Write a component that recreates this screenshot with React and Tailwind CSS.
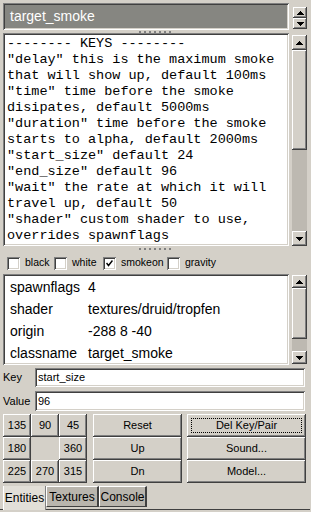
import React from "react";

const sunken =
  "shadow-[inset_1px_1px_0_#808080,inset_-1px_-1px_0_#ffffff,inset_2px_2px_0_#404040,inset_-2px_-2px_0_#d4d0c8]";
const raised =
  "shadow-[inset_-1px_-1px_0_#404040,inset_1px_1px_0_#ffffff,inset_-2px_-2px_0_#808080,inset_2px_2px_0_#d4d0c8]";

const Arrow = ({ down }) => (
  <svg width="7" height="4" viewBox="0 0 7 4" shapeRendering="crispEdges">
    <polygon points={down ? "0,0 7,0 3.5,4" : "0,4 7,4 3.5,0"} fill="#000" />
  </svg>
);

const ArrowBtn = ({ down, className = "" }) => (
  <div className={`flex items-center justify-center bg-[#d4d0c8] ${raised} ${className}`}>
    <Arrow down={down} />
  </div>
);

const Dots = () => (
  <div className="flex justify-center gap-[3px]">
    {[0, 1, 2, 3, 4, 5, 6].map((i) => (
      <div key={i} className="w-[2px] h-[2px] bg-[#808080]" />
    ))}
  </div>
);

const Checkbox = ({ label, checked, width }) => (
  <div className={`flex items-center ${width}`}>
    <div className={`w-[13px] h-[13px] bg-white flex items-center justify-center ${sunken}`}>
      {checked && (
        <svg width="7" height="7" viewBox="0 0 7 7">
          <polyline points="0.5,3 2.5,5.5 6.5,0.5" fill="none" stroke="#000" strokeWidth="1.5" />
        </svg>
      )}
    </div>
    <span className="ml-[5px] text-[10.5px] text-black">{label}</span>
  </div>
);

const Btn = ({ children, className = "", focus }) => (
  <div className={`flex items-center justify-center bg-[#d4d0c8] text-[11px] text-black ${raised} ${className}`}>
    {focus ? (
      <div className="m-[4px] flex-1 self-stretch flex items-center justify-center border border-dotted border-black">
        {children}
      </div>
    ) : (
      children
    )}
  </div>
);

const keysText = [
  "-------- KEYS --------",
  '"delay" this is the maximum smoke',
  "that will show up, default 100ms",
  '"time" time before the smoke',
  "disipates, default 5000ms",
  '"duration" time before the smoke',
  "starts to alpha, default 2000ms",
  '"start_size" default 24',
  '"end_size" default 96',
  '"wait" the rate at which it will',
  "travel up, default 50",
  '"shader" custom shader to use,',
  "overrides spawnflags",
];

const props = [
  ["spawnflags", "4"],
  ["shader", "textures/druid/tropfen"],
  ["origin", "-288 8 -40"],
  ["classname", "target_smoke"],
];

const App = () => {
  return (
    <div className="w-[311px] h-[512px] bg-[#d4d0c8] font-['Liberation_Sans',Arial,sans-serif] flex flex-col pl-[3px] pr-[4px] pt-[3px] overflow-hidden">
      {/* entity class */}
      <div className="flex justify-between">
        <div className={`w-[286px] h-[27px] bg-[#868681] flex items-center pl-[7px] text-white text-[14px] ${sunken}`}>
          target_smoke
        </div>
        <div className="flex flex-col mt-[4px] w-[14px]">
          <ArrowBtn className="h-[11px]" />
          <ArrowBtn down className="h-[11px]" />
        </div>
      </div>

      <div className="h-[3px] flex items-center">
        <div className="w-full"><Dots /></div>
      </div>

      {/* description */}
      <div className="flex justify-between">
        <div className={`w-[286px] h-[213px] bg-white pt-[3px] pl-[4px] overflow-hidden ${sunken}`}>
          {keysText.map((l, i) => (
            <div key={i} className="font-['Liberation_Mono','Courier_New',monospace] text-[13.5px] leading-[16px] text-black whitespace-pre">
              {l}
            </div>
          ))}
        </div>
        <div className="w-[15px] mt-[2px] h-[211px] flex flex-col bg-[#d4d0c8]">
          <ArrowBtn className="h-[15px]" />
          <div className={`h-[100px] ${raised}`} />
          <div className="flex-1 bg-[#bdb9b1]" />
          <ArrowBtn down className="h-[15px]" />
        </div>
      </div>

      <div className="h-[6px] flex items-center">
        <div className="w-full"><Dots /></div>
      </div>

      {/* spawnflags */}
      <div className="h-[22px] flex items-center pl-[4px]">
        <Checkbox label="black" width="w-[47px]" />
        <Checkbox label="white" width="w-[49px]" />
        <Checkbox label="smokeon" checked width="w-[64px]" />
        <Checkbox label="gravity" width="w-[60px]" />
      </div>

      {/* key/value list */}
      <div className="flex justify-between">
        <div className={`w-[286px] h-[91px] bg-white pt-[2px] pl-[7px] overflow-hidden ${sunken}`}>
          {props.map(([k, v]) => (
            <div key={k} className="flex items-center h-[22px] text-[14px] text-black">
              <span className="w-[78px]">{k}</span>
              <span>{v}</span>
            </div>
          ))}
        </div>
        <div className="w-[15px] mt-[1px] h-[89px] flex flex-col">
          <ArrowBtn className="h-[13px]" />
          <div className={`h-[51px] ${raised}`} />
          <div className="flex-1 bg-[#bdb9b1]" />
          <ArrowBtn down className="h-[13px]" />
        </div>
      </div>

      {/* key / value inputs */}
      <div className="flex items-center mt-[3px] h-[19px]">
        <span className="w-[32px] text-[11px] text-black">Key</span>
        <div className={`w-[270px] h-[19px] bg-white flex items-center pl-[3px] text-[11px] text-black ${sunken}`}>
          start_size
        </div>
      </div>
      <div className="flex items-center mt-[4px] h-[20px]">
        <span className="w-[32px] text-[11px] text-black">Value</span>
        <div className={`w-[270px] h-[20px] bg-white flex items-center pl-[3px] text-[11px] text-black ${sunken}`}>
          96
        </div>
      </div>

      {/* buttons */}
      <div className="flex mt-[3px]">
        <div className="grid grid-cols-[28px_28px_28px] grid-rows-[23px_23px_23px] w-[84px]">
          <Btn>135</Btn>
          <Btn>90</Btn>
          <Btn>45</Btn>
          <Btn>180</Btn>
          <div />
          <Btn>360</Btn>
          <Btn>225</Btn>
          <Btn>270</Btn>
          <Btn>315</Btn>
        </div>
        <div className="grid grid-rows-[23px_23px_23px] w-[89px] ml-[6px]">
          <Btn>Reset</Btn>
          <Btn>Up</Btn>
          <Btn>Dn</Btn>
        </div>
        <div className="grid grid-rows-[23px_23px_23px] w-[119px] ml-[5px]">
          <Btn focus>Del Key/Pair</Btn>
          <Btn>Sound...</Btn>
          <Btn>Model...</Btn>
        </div>
      </div>

      {/* tabs */}
      <div className="flex items-start mt-[3px] h-[24px] border-b border-[#404040] -mx-[3px] px-[3px]">
        <div className="h-[24px] w-[43px] bg-[#e2dfd8] flex items-center justify-center text-[12px] text-black border-l border-white border-r border-r-[#808080]">
          Entities
        </div>
        <div className="h-[21px] w-[53px] bg-[#b9b5ad] flex items-center justify-center text-[12px] text-black border-t border-l border-[#ffffff] border-r-2 border-r-[#404040] border-b border-b-[#404040]">
          Textures
        </div>
        <div className="h-[21px] w-[48px] bg-[#b9b5ad] flex items-center justify-center text-[12px] text-black border-t border-l border-[#ffffff] border-r-2 border-r-[#404040] border-b border-b-[#404040]">
          Console
        </div>
      </div>
    </div>
  );
};

export default App;
